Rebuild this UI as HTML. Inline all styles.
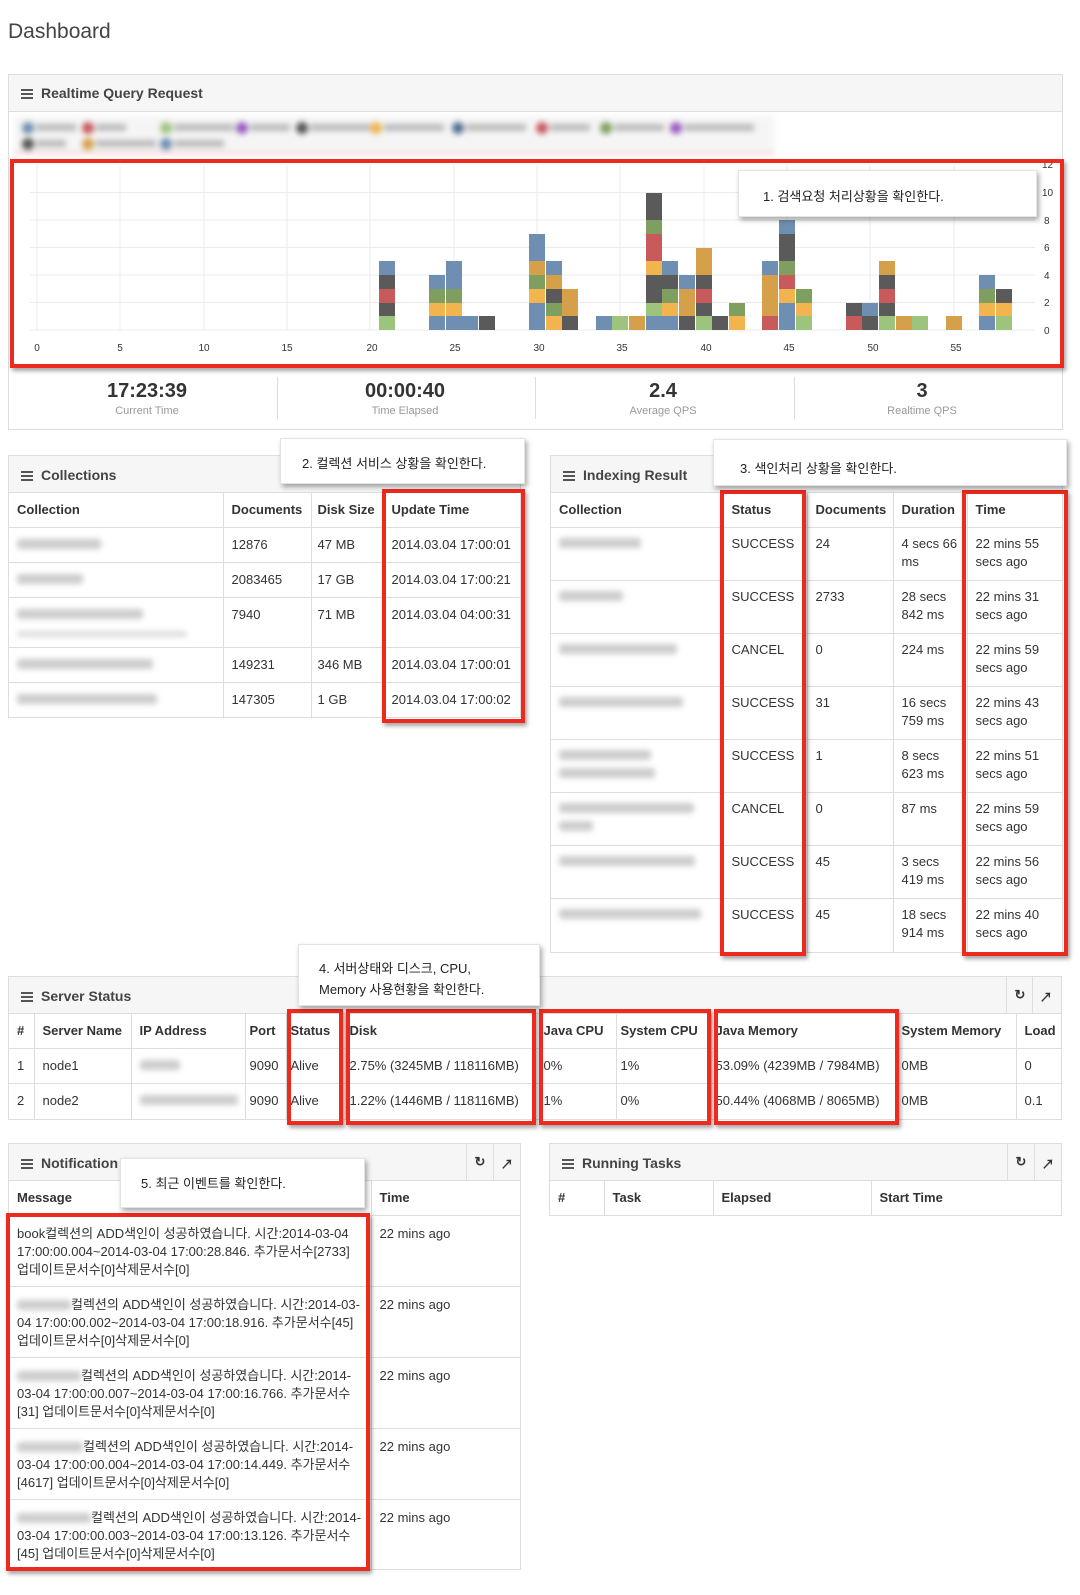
<!DOCTYPE html>
<html><head><meta charset="utf-8"><style>
*{box-sizing:border-box;margin:0;padding:0}
body{width:1080px;height:1595px;background:#fff;font-family:"Liberation Sans","Noto Sans CJK KR",sans-serif;font-size:13px;color:#333;position:relative;overflow:hidden}
.a{position:absolute}
.panel{position:absolute;border:1px solid #ddd;background:#fff}
.ph{position:absolute;left:0;right:0;top:0;background:#f6f6f6;border-bottom:1px solid #ddd;font-weight:bold;font-size:14px;color:#444}
.ph span{position:absolute;left:12px}
.ham{display:inline-block;width:12px;height:10px;border-top:2px solid #555;border-bottom:2px solid #555;position:relative;margin-right:8px;vertical-align:-1px}
.ham:after{content:"";position:absolute;left:0;right:0;top:2px;border-top:2px solid #555}
table{border-collapse:collapse;table-layout:fixed;position:absolute;left:0}
td,th{border:1px solid #ddd;border-bottom:none;padding:0 8px;text-align:left;vertical-align:top;line-height:18px}
th{font-weight:bold;vertical-align:middle;white-space:nowrap;overflow:hidden}
tr td:first-child,tr th:first-child{border-left:none}
tr td:last-child,tr th:last-child{border-right:none}
.red{position:absolute;border:4px solid #ee2a1e;box-shadow:2px 3px 4px rgba(0,0,0,.35)}
.tip{position:absolute;background:#fff;box-shadow:2px 3px 5px rgba(0,0,0,.35);font-size:13px;color:#222;border:1px solid #e4e4e4}
.blur{display:inline-block;background:#ccc;filter:blur(3px);height:10px;border-radius:3px}
.ib{position:absolute;top:0;bottom:0;width:27px;border-left:1px solid #ddd;text-align:center;font-size:13px;color:#333;padding-top:10px}
.b{position:absolute;width:16px;bottom:1265px;display:flex;flex-direction:column-reverse}
.b i{display:block;height:13.75px}
.u{background:#6f8fb2}.g{background:#9dc47d}.r{background:#c85a5c}.d{background:#5a5a5a}.o{background:#f1b44f}.k{background:#7e9f5f}.y{background:#d6a04a}
.stat{position:absolute;top:380px;width:258px;text-align:center}
.stat b{display:block;font-size:20px;color:#333;line-height:22px}
.stat s{display:block;text-decoration:none;font-size:11px;color:#999;margin-top:3px}
.sd{position:absolute;top:377px;height:42px;border-left:1px solid #ddd}
</style></head><body>
<div class="a" style="left:8px;top:20px;font-size:21px;color:#444">Dashboard</div>

<!-- Realtime -->
<div class="panel" style="left:8px;top:74px;width:1055px;height:356px">
 <div class="ph" style="height:37px"><span style="top:10px"><i class="ham"></i>Realtime Query Request</span></div>
</div>
<div class="a" style="left:14px;top:116px;width:760px;height:38px;filter:blur(3px);border-bottom:2px solid #f4c4c4;background:#f5f5f5">
 <div class="a" style="left:8px;top:6px;width:12px;height:12px;border-radius:6px;background:#6f8fb2"></div>
 <div class="a" style="left:22px;top:8px;width:40px;height:7px;background:#bbb"></div>
 <div class="a" style="left:68px;top:6px;width:12px;height:12px;border-radius:6px;background:#c85a5c"></div>
 <div class="a" style="left:82px;top:8px;width:30px;height:7px;background:#bbb"></div>
 <div class="a" style="left:146px;top:6px;width:12px;height:12px;border-radius:6px;background:#9dc47d"></div>
 <div class="a" style="left:160px;top:8px;width:60px;height:7px;background:#bbb"></div>
 <div class="a" style="left:222px;top:6px;width:12px;height:12px;border-radius:6px;background:#9a5bc0"></div>
 <div class="a" style="left:236px;top:8px;width:40px;height:7px;background:#bbb"></div>
 <div class="a" style="left:282px;top:6px;width:12px;height:12px;border-radius:6px;background:#555"></div>
 <div class="a" style="left:296px;top:8px;width:60px;height:7px;background:#bbb"></div>
 <div class="a" style="left:356px;top:6px;width:12px;height:12px;border-radius:6px;background:#f1b44f"></div>
 <div class="a" style="left:370px;top:8px;width:60px;height:7px;background:#bbb"></div>
 <div class="a" style="left:438px;top:6px;width:12px;height:12px;border-radius:6px;background:#4f6f92"></div>
 <div class="a" style="left:452px;top:8px;width:60px;height:7px;background:#bbb"></div>
 <div class="a" style="left:522px;top:6px;width:12px;height:12px;border-radius:6px;background:#c85a5c"></div>
 <div class="a" style="left:536px;top:8px;width:40px;height:7px;background:#bbb"></div>
 <div class="a" style="left:586px;top:6px;width:12px;height:12px;border-radius:6px;background:#7e9f5f"></div>
 <div class="a" style="left:600px;top:8px;width:50px;height:7px;background:#bbb"></div>
 <div class="a" style="left:656px;top:6px;width:12px;height:12px;border-radius:6px;background:#9a5bc0"></div>
 <div class="a" style="left:670px;top:8px;width:70px;height:7px;background:#bbb"></div>
 <div class="a" style="left:8px;top:22px;width:12px;height:12px;border-radius:6px;background:#555"></div>
 <div class="a" style="left:22px;top:24px;width:30px;height:7px;background:#bbb"></div>
 <div class="a" style="left:68px;top:22px;width:12px;height:12px;border-radius:6px;background:#d6a04a"></div>
 <div class="a" style="left:82px;top:24px;width:60px;height:7px;background:#bbb"></div>
 <div class="a" style="left:146px;top:22px;width:12px;height:12px;border-radius:6px;background:#6f8fb2"></div>
 <div class="a" style="left:160px;top:24px;width:50px;height:7px;background:#bbb"></div>
</div>
<svg class="a" style="left:0;top:0" width="1080" height="380">
 <g stroke="#ebebeb" stroke-width="1">
  <line x1="37" y1="165" x2="37" y2="330"/><line x1="120" y1="165" x2="120" y2="330"/><line x1="204" y1="165" x2="204" y2="330"/><line x1="287" y1="165" x2="287" y2="330"/><line x1="370" y1="165" x2="370" y2="330"/><line x1="454" y1="165" x2="454" y2="330"/><line x1="537" y1="165" x2="537" y2="330"/><line x1="620" y1="165" x2="620" y2="330"/><line x1="704" y1="165" x2="704" y2="330"/><line x1="787" y1="165" x2="787" y2="330"/><line x1="870" y1="165" x2="870" y2="330"/><line x1="954" y1="165" x2="954" y2="330"/>
  <line x1="30" y1="192.5" x2="1035" y2="192.5"/><line x1="30" y1="220" x2="1035" y2="220"/><line x1="30" y1="247.5" x2="1035" y2="247.5"/><line x1="30" y1="275" x2="1035" y2="275"/><line x1="30" y1="302.5" x2="1035" y2="302.5"/><line x1="30" y1="330" x2="1035" y2="330"/>
 </g>
 <g font-family="Liberation Sans" font-size="10" fill="#333" text-anchor="middle">
  <text x="37" y="351">0</text><text x="120" y="351">5</text><text x="204" y="351">10</text><text x="287" y="351">15</text><text x="372" y="351">20</text><text x="455" y="351">25</text><text x="539" y="351">30</text><text x="622" y="351">35</text><text x="706" y="351">40</text><text x="789" y="351">45</text><text x="873" y="351">50</text><text x="956" y="351">55</text>
 </g>
 <g font-family="Liberation Sans" font-size="10" fill="#333">
  <text x="1042" y="168">12</text><text x="1042" y="196">10</text><text x="1044" y="224">8</text><text x="1044" y="251">6</text><text x="1044" y="279">4</text><text x="1044" y="306">2</text><text x="1044" y="334">0</text>
 </g>
</svg>
<div class="b" style="left:379px"><i class="g"></i><i class="d"></i><i class="r"></i><i class="d"></i><i class="u"></i></div>
<div class="b" style="left:429px"><i class="u"></i><i class="o"></i><i class="k"></i><i class="u"></i></div>
<div class="b" style="left:446px"><i class="u"></i><i class="o"></i><i class="k"></i><i class="u"></i><i class="u"></i></div>
<div class="b" style="left:462px"><i class="u"></i></div>
<div class="b" style="left:479px"><i class="d"></i></div>
<div class="b" style="left:529px"><i class="u"></i><i class="u"></i><i class="o"></i><i class="k"></i><i class="y"></i><i class="u"></i><i class="u"></i></div>
<div class="b" style="left:546px"><i class="o"></i><i class="k"></i><i class="d"></i><i class="y"></i><i class="u"></i></div>
<div class="b" style="left:562px"><i class="d"></i><i class="y"></i><i class="y"></i></div>
<div class="b" style="left:596px"><i class="u"></i></div>
<div class="b" style="left:612px"><i class="g"></i></div>
<div class="b" style="left:629px"><i class="y"></i></div>
<div class="b" style="left:646px"><i class="u"></i><i class="g"></i><i class="d"></i><i class="d"></i><i class="o"></i><i class="r"></i><i class="r"></i><i class="k"></i><i class="d"></i><i class="d"></i></div>
<div class="b" style="left:662px"><i class="u"></i><i class="o"></i><i class="k"></i><i class="d"></i><i class="u"></i></div>
<div class="b" style="left:679px"><i class="d"></i><i class="y"></i><i class="y"></i><i class="u"></i></div>
<div class="b" style="left:696px"><i class="g"></i><i class="d"></i><i class="r"></i><i class="d"></i><i class="y"></i><i class="y"></i></div>
<div class="b" style="left:712px"><i class="d"></i></div>
<div class="b" style="left:729px"><i class="o"></i><i class="k"></i></div>
<div class="b" style="left:762px"><i class="r"></i><i class="y"></i><i class="y"></i><i class="y"></i><i class="u"></i></div>
<div class="b" style="left:779px"><i class="u"></i><i class="u"></i><i class="o"></i><i class="r"></i><i class="k"></i><i class="d"></i><i class="d"></i><i class="u"></i></div>
<div class="b" style="left:796px"><i class="g"></i><i class="o"></i><i class="k"></i></div>
<div class="b" style="left:846px"><i class="r"></i><i class="d"></i></div>
<div class="b" style="left:862px"><i class="d"></i><i class="u"></i></div>
<div class="b" style="left:879px"><i class="g"></i><i class="d"></i><i class="r"></i><i class="d"></i><i class="y"></i></div>
<div class="b" style="left:896px"><i class="y"></i></div>
<div class="b" style="left:912px"><i class="g"></i></div>
<div class="b" style="left:946px"><i class="y"></i></div>
<div class="b" style="left:979px"><i class="u"></i><i class="o"></i><i class="k"></i><i class="u"></i></div>
<div class="b" style="left:996px"><i class="g"></i><i class="o"></i><i class="d"></i></div>
<div class="red" style="left:10px;top:159px;width:1054px;height:209px"></div>
<div class="tip" style="left:738px;top:170px;width:299px;height:47px;padding:15px 0 0 24px">1. 검색요청 처리상황을 확인한다.</div>
<div class="sd" style="left:277px"></div><div class="sd" style="left:535px"></div><div class="sd" style="left:794px"></div>
<div class="stat" style="left:18px"><b>17:23:39</b><s>Current Time</s></div>
<div class="stat" style="left:276px"><b>00:00:40</b><s>Time Elapsed</s></div>
<div class="stat" style="left:534px"><b>2.4</b><s>Average QPS</s></div>
<div class="stat" style="left:793px"><b>3</b><s>Realtime QPS</s></div>

<!-- Collections -->
<div class="panel" style="left:8px;top:455px;width:513px;height:263px">
 <div class="ph" style="height:37px"><span style="top:11px"><i class="ham"></i>Collections</span></div>
 <table style="top:36px;width:511px">
  <colgroup><col style="width:214px"><col style="width:88px"><col style="width:72px"><col></colgroup>
  <tr style="height:35px"><th>Collection</th><th>Documents</th><th style="padding:0 6px">Disk Size</th><th>Update Time</th></tr>
  <tr style="height:35px"><td style="padding-top:8px"><span class="blur" style="width:84px"></span></td><td style="padding-top:8px">12876</td><td style="padding:8px 6px 0">47 MB</td><td style="padding-top:8px">2014.03.04 17:00:01</td></tr>
  <tr style="height:35px"><td style="padding-top:8px"><span class="blur" style="width:66px"></span></td><td style="padding-top:8px">2083465</td><td style="padding:8px 6px 0">17 GB</td><td style="padding-top:8px">2014.03.04 17:00:21</td></tr>
  <tr style="height:50px"><td style="padding-top:8px"><span class="blur" style="width:126px"></span><br><span class="blur" style="width:170px;height:6px;background:#ddd"></span></td><td style="padding-top:8px">7940</td><td style="padding:8px 6px 0">71 MB</td><td style="padding-top:8px">2014.03.04 04:00:31</td></tr>
  <tr style="height:35px"><td style="padding-top:8px"><span class="blur" style="width:136px"></span></td><td style="padding-top:8px">149231</td><td style="padding:8px 6px 0">346 MB</td><td style="padding-top:8px">2014.03.04 17:00:01</td></tr>
  <tr style="height:35px"><td style="padding-top:8px"><span class="blur" style="width:140px"></span></td><td style="padding-top:8px">147305</td><td style="padding:8px 6px 0">1 GB</td><td style="padding-top:8px">2014.03.04 17:00:02</td></tr>
 </table>
</div>
<div class="red" style="left:382px;top:489px;width:143px;height:234px"></div>
<div class="tip" style="left:280px;top:438px;width:245px;height:46px;padding:14px 0 0 21px">2. 컬렉션 서비스 상황을 확인한다.</div>

<!-- Indexing -->
<div class="panel" style="left:550px;top:455px;width:513px;height:498px">
 <div class="ph" style="height:37px"><span style="top:11px"><i class="ham"></i>Indexing Result</span></div>
 <table style="top:36px;width:511px">
  <colgroup><col style="width:172px"><col style="width:84px"><col style="width:86px"><col style="width:74px"><col></colgroup>
  <tr style="height:35px"><th>Collection</th><th>Status</th><th>Documents</th><th>Duration</th><th>Time</th></tr>
  <tr style="height:53px"><td style="padding-top:7px"><span class="blur" style="width:82px"></span></td><td style="padding-top:7px">SUCCESS</td><td style="padding-top:7px">24</td><td style="padding-top:7px">4 secs 66 ms</td><td style="padding-top:7px">22 mins 55 secs ago</td></tr>
  <tr style="height:53px"><td style="padding-top:7px"><span class="blur" style="width:64px"></span></td><td style="padding-top:7px">SUCCESS</td><td style="padding-top:7px">2733</td><td style="padding-top:7px">28 secs 842 ms</td><td style="padding-top:7px">22 mins 31 secs ago</td></tr>
  <tr style="height:53px"><td style="padding-top:7px"><span class="blur" style="width:118px"></span></td><td style="padding-top:7px">CANCEL</td><td style="padding-top:7px">0</td><td style="padding-top:7px">224 ms</td><td style="padding-top:7px">22 mins 59 secs ago</td></tr>
  <tr style="height:53px"><td style="padding-top:7px"><span class="blur" style="width:124px"></span></td><td style="padding-top:7px">SUCCESS</td><td style="padding-top:7px">31</td><td style="padding-top:7px">16 secs 759 ms</td><td style="padding-top:7px">22 mins 43 secs ago</td></tr>
  <tr style="height:53px"><td style="padding-top:7px"><span class="blur" style="width:92px"></span><br><span class="blur" style="width:96px"></span></td><td style="padding-top:7px">SUCCESS</td><td style="padding-top:7px">1</td><td style="padding-top:7px">8 secs 623 ms</td><td style="padding-top:7px">22 mins 51 secs ago</td></tr>
  <tr style="height:53px"><td style="padding-top:7px"><span class="blur" style="width:135px"></span><br><span class="blur" style="width:34px"></span></td><td style="padding-top:7px">CANCEL</td><td style="padding-top:7px">0</td><td style="padding-top:7px">87 ms</td><td style="padding-top:7px">22 mins 59 secs ago</td></tr>
  <tr style="height:53px"><td style="padding-top:7px"><span class="blur" style="width:136px"></span></td><td style="padding-top:7px">SUCCESS</td><td style="padding-top:7px">45</td><td style="padding-top:7px">3 secs 419 ms</td><td style="padding-top:7px">22 mins 56 secs ago</td></tr>
  <tr style="height:53px"><td style="padding-top:7px"><span class="blur" style="width:142px"></span></td><td style="padding-top:7px">SUCCESS</td><td style="padding-top:7px">45</td><td style="padding-top:7px">18 secs 914 ms</td><td style="padding-top:7px">22 mins 40 secs ago</td></tr>
 </table>
</div>
<div class="red" style="left:720px;top:490px;width:86px;height:466px"></div>
<div class="red" style="left:962px;top:490px;width:106px;height:466px"></div>
<div class="tip" style="left:713px;top:439px;width:354px;height:47px;padding:18px 0 0 26px">3. 색인처리 상황을 확인한다.</div>

<!-- Server Status -->
<div class="panel" style="left:8px;top:976px;width:1054px;height:144px">
 <div class="ph" style="height:37px"><span style="top:11px"><i class="ham"></i>Server Status</span>
  <div class="ib" style="left:997px">&#x21bb;</div><div class="ib" style="left:1023px;border-left-color:#ddd">&#x2197;</div></div>
 <table style="top:36px;width:1052px">
  <colgroup><col style="width:25px"><col style="width:97px"><col style="width:114px"><col style="width:41px"><col style="width:59px"><col style="width:194px"><col style="width:77px"><col style="width:95px"><col style="width:186px"><col style="width:119px"><col></colgroup>
  <tr style="height:35px"><th>#</th><th>Server Name</th><th>IP Address</th><th style="padding:0 4px">Port</th><th style="padding:0 4px">Status</th><th style="padding:0 4px">Disk</th><th style="padding:0 4px">Java CPU</th><th style="padding:0 4px">System CPU</th><th style="padding:0 4px">Java Memory</th><th style="padding:0 4px">System Memory</th><th>Load</th></tr>
  <tr style="height:35px"><td style="padding-top:8px">1</td><td style="padding-top:8px">node1</td><td style="padding-top:8px"><span class="blur" style="width:40px"></span></td><td style="padding:8px 4px 0">9090</td><td style="padding:8px 4px 0">Alive</td><td style="padding:8px 4px 0">2.75% (3245MB / 118116MB)</td><td style="padding:8px 4px 0">0%</td><td style="padding:8px 4px 0">1%</td><td style="padding:8px 4px 0">53.09% (4239MB / 7984MB)</td><td style="padding:8px 4px 0">0MB</td><td style="padding-top:8px">0</td></tr>
  <tr style="height:35px"><td style="padding-top:8px">2</td><td style="padding-top:8px">node2</td><td style="padding-top:8px"><span class="blur" style="width:98px"></span></td><td style="padding:8px 4px 0">9090</td><td style="padding:8px 4px 0">Alive</td><td style="padding:8px 4px 0">1.22% (1446MB / 118116MB)</td><td style="padding:8px 4px 0">1%</td><td style="padding:8px 4px 0">0%</td><td style="padding:8px 4px 0">50.44% (4068MB / 8065MB)</td><td style="padding:8px 4px 0">0MB</td><td style="padding-top:8px">0.1</td></tr>
 </table>
</div>
<div class="red" style="left:287px;top:1009px;width:56px;height:116px"></div>
<div class="red" style="left:346px;top:1009px;width:190px;height:116px"></div>
<div class="red" style="left:539px;top:1009px;width:172px;height:116px"></div>
<div class="red" style="left:714px;top:1009px;width:185px;height:116px"></div>
<div class="tip" style="left:298px;top:944px;width:242px;height:62px;padding:13px 0 0 20px;line-height:21px">4. 서버상태와 디스크, CPU,<br>Memory 사용현황을 확인한다.</div>

<!-- Notifications -->
<div class="panel" style="left:8px;top:1143px;width:513px;height:427px">
 <div class="ph" style="height:37px"><span style="top:11px"><i class="ham"></i>Notification</span>
  <div class="ib" style="left:457px">&#x21bb;</div><div class="ib" style="left:484px">&#x2197;</div></div>
 <table style="top:36px;width:511px">
  <colgroup><col style="width:362px"><col></colgroup>
  <tr style="height:35px"><th>Message</th><th>Time</th></tr>
  <tr style="height:71px"><td style="padding-top:9px">book컬렉션의 ADD색인이 성공하였습니다. 시간:2014-03-04 17:00:00.004~2014-03-04 17:00:28.846. 추가문서수[2733] 업데이트문서수[0]삭제문서수[0]</td><td style="padding-top:9px">22 mins ago</td></tr>
  <tr style="height:71px"><td style="padding-top:9px"><span class="blur" style="width:54px;vertical-align:-1px"></span>컬렉션의 ADD색인이 성공하였습니다. 시간:2014-03-04 17:00:00.002~2014-03-04 17:00:18.916. 추가문서수[45] 업데이트문서수[0]삭제문서수[0]</td><td style="padding-top:9px">22 mins ago</td></tr>
  <tr style="height:71px"><td style="padding-top:9px"><span class="blur" style="width:64px;vertical-align:-1px"></span>컬렉션의 ADD색인이 성공하였습니다. 시간:2014-03-04 17:00:00.007~2014-03-04 17:00:16.766. 추가문서수[31] 업데이트문서수[0]삭제문서수[0]</td><td style="padding-top:9px">22 mins ago</td></tr>
  <tr style="height:71px"><td style="padding-top:9px"><span class="blur" style="width:66px;vertical-align:-1px"></span>컬렉션의 ADD색인이 성공하였습니다. 시간:2014-03-04 17:00:00.004~2014-03-04 17:00:14.449. 추가문서수[4617] 업데이트문서수[0]삭제문서수[0]</td><td style="padding-top:9px">22 mins ago</td></tr>
  <tr style="height:71px"><td style="padding-top:9px"><span class="blur" style="width:74px;vertical-align:-1px"></span>컬렉션의 ADD색인이 성공하였습니다. 시간:2014-03-04 17:00:00.003~2014-03-04 17:00:13.126. 추가문서수[45] 업데이트문서수[0]삭제문서수[0]</td><td style="padding-top:9px">22 mins ago</td></tr>
 </table>
</div>
<div class="red" style="left:6px;top:1213px;width:364px;height:358px"></div>
<div class="tip" style="left:120px;top:1158px;width:245px;height:50px;padding:14px 0 0 20px">5. 최근 이벤트를 확인한다.</div>

<!-- Running Tasks -->
<div class="panel" style="left:549px;top:1143px;width:513px;height:73px">
 <div class="ph" style="height:37px"><span style="top:11px"><i class="ham"></i>Running Tasks</span>
  <div class="ib" style="left:457px">&#x21bb;</div><div class="ib" style="left:484px">&#x2197;</div></div>
 <table style="top:36px;width:511px">
  <colgroup><col style="width:54px"><col style="width:109px"><col style="width:158px"><col></colgroup>
  <tr style="height:35px"><th>#</th><th>Task</th><th>Elapsed</th><th>Start Time</th></tr>
 </table>
</div>
</body></html>
